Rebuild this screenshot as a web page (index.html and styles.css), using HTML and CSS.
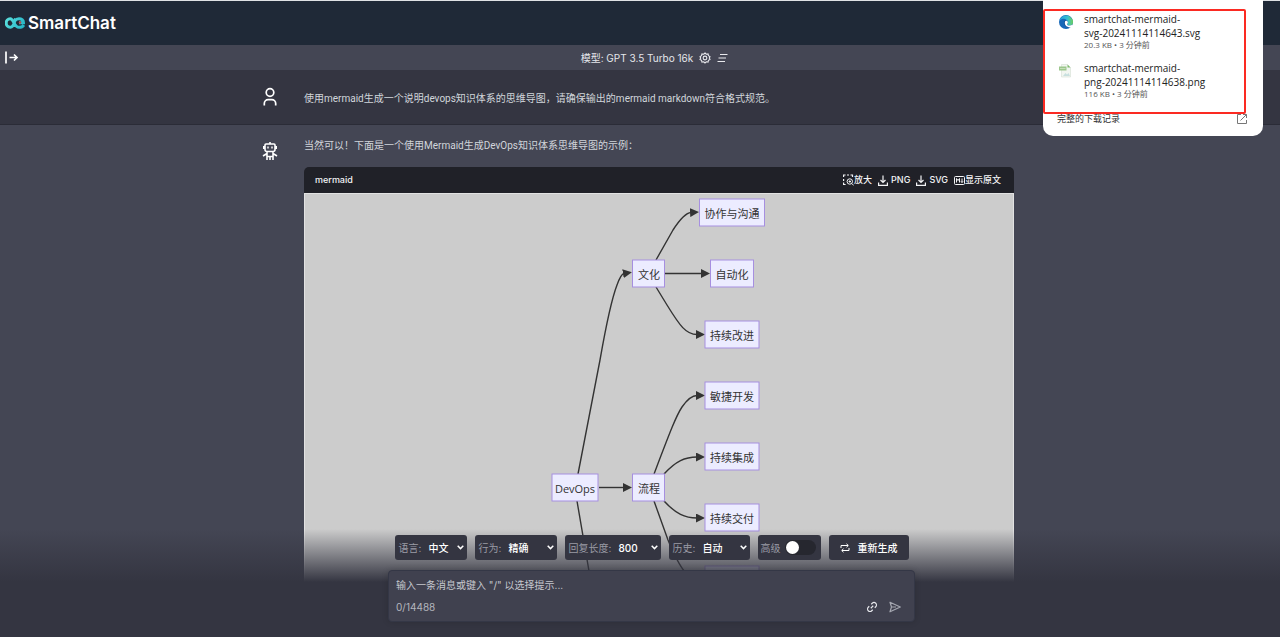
FILE: index.html
```html
<!DOCTYPE html>
<html lang="zh-CN">
<head>
<meta charset="utf-8">
<title>SmartChat</title>
<link rel="stylesheet" href="styles.css">
</head>
<body>
<div class="app">
  <header class="header">
    <svg class="logo" width="20" height="12" viewBox="0 0 20 12" fill="none" aria-hidden="true">
      <defs><linearGradient id="logo-tint" x1="0" y1="0" x2="20" y2="12" gradientUnits="userSpaceOnUse"><stop stop-color="#5fe3df"/><stop offset="1" stop-color="#1fb0c4"/></linearGradient></defs>
      <path d="M10.500 1.500C9.500 5 9 10.300 5.200 10.300A4 4.300 0 1 1 5.200 1.700C9 1.700 9 10.300 14 10.300C16.500 10.300 18 9.500 18.800 8M10 3.700C11 2.200 12.300 1.700 14 1.700C16.500 1.700 18.500 3.200 18.500 5.700H14" stroke="url(#logo-tint)" stroke-width="3"/>
      <circle cx="15" cy="5.500" r="1.200" fill="#b8464a"/>
    </svg>
    <h1 class="brand">SmartChat</h1>
  </header>

  <div class="modelbar">
    <button class="icon-button" aria-label="展开侧栏">
      <svg width="14" height="14" viewBox="0 0 14 14" fill="none" stroke="currentColor" stroke-width="1.700"><path d="M1 .5v12M4.500 6.500H12M9 3.500l3 3-3 3"/></svg>
    </button>
    <div class="model">
      <span>模型: GPT 3.5 Turbo 16k</span>
      <button class="icon-button" aria-label="设置">
        <svg width="12" height="12" viewBox="0 0 24 24" fill="none" stroke="currentColor" stroke-width="2.200"><path d="M12 2l2.600 2.500 3.500-.6.8 3.500L22 9.200 20.600 12l1.400 2.900-3.100 1.700-.8 3.500-3.500-.6L12 22l-2.600-2.500-3.500.6-.8-3.500L2 14.900 3.400 12 2 9.200l3.100-1.800.8-3.500 3.500.6z"/><circle cx="12" cy="12" r="3.700"/></svg>
      </button>
      <button class="icon-button" aria-label="清空对话">
        <svg width="11" height="10" viewBox="0 0 11 10" fill="none" stroke="currentColor"><path d="M3 1.500h7.500M1.500 5H9M.5 8.500h7.500"/></svg>
      </button>
    </div>
  </div>

  <main class="chat">
    <section class="message message-user">
      <div class="message-inner">
        <svg class="avatar" width="16" height="20" viewBox="0 0 16 20" fill="none" stroke="currentColor" stroke-width="1.700" aria-hidden="true"><circle cx="8" cy="5.500" r="3.800"/><path d="M2.300 18.500v-2a3.800 3.800 0 0 1 3.800-3.800h3.800a3.800 3.800 0 0 1 3.800 3.800v2"/></svg>
        <p>使用mermaid生成一个说明devops知识体系的思维导图，请确保输出的mermaid markdown符合格式规范。</p>
      </div>
    </section>
    <section class="message message-bot">
      <div class="message-inner">
        <svg class="avatar" width="16" height="20" viewBox="0 0 16 20" fill="none" stroke="currentColor" stroke-width="1.600" aria-hidden="true"><path d="M8 1v2M4 3h8a1 1 0 0 1 1 1v4.500a2 2 0 0 1-2 2H5a2 2 0 0 1-2-2V4a1 1 0 0 1 1-1zM1.800 5v3M14.200 5v3M5 10.500V19M11 10.500V19M5 12.500L1 15M11 12.500l4 2.500M5 15.500h6M8 15.500v3.500"/><path d="M5.300 6.500h1.400M9.300 6.500h1.400" stroke-width="1.800"/></svg>
        <div class="answer">
          <p>当然可以！下面是一个使用Mermaid生成DevOps知识体系思维导图的示例：</p>
          <div class="codebox">
            <div class="codebar">
              <span>mermaid</span>
              <div class="tools">
                <button class="tool"><svg width="11" height="12" viewBox="0 0 11 12" fill="none" stroke="currentColor"><path d="M.6 3V1h2M4 1h2M7.500 1h2v2M.6 5v2M.6 8.500v2h2" stroke-width="1.200"/><circle cx="6.800" cy="7.500" r="2.700"/><path d="M8.800 9.500l2 2M5.600 7.500h2.400M6.800 6.300v2.400"/></svg>放大</button>
                <button class="tool tool-spaced"><svg width="10" height="11" viewBox="0 0 10 11" fill="none" stroke="currentColor" stroke-width="1.200"><path d="M5 .5v7M2.500 5L5 7.500 7.500 5M.6 7.500v2.800h8.800V7.500"/></svg>PNG</button>
                <button class="tool tool-spaced"><svg width="10" height="11" viewBox="0 0 10 11" fill="none" stroke="currentColor" stroke-width="1.200"><path d="M5 .5v7M2.500 5L5 7.500 7.500 5M.6 7.500v2.800h8.800V7.500"/></svg>SVG</button>
                <button class="tool"><svg width="11" height="9" viewBox="0 0 11 9" fill="none" stroke="currentColor"><rect x=".5" y=".5" width="10" height="8" rx="1"/><path d="M2.500 6.500v-4l1.500 2 1.500-2v4M8 2.500v4M7 5.300l1 1.200 1-1.200"/></svg>显示原文</button>
              </div>
            </div>
            <div class="canvas">
              <svg class="diagram" width="710" height="446" viewBox="0 0 710 446" role="img" aria-label="DevOps 知识体系">
                <defs><marker id="arrow" markerUnits="userSpaceOnUse" markerWidth="9" markerHeight="9" refX="1" refY="4.500" orient="auto"><path d="M0 0L9 4.500L0 9z" fill="#333"/></marker></defs>
                <g class="edges">
                  <path d="M352 66L369 36Q380 19 387 18.500"/>
                  <path d="M361 79.500H398"/>
                  <path d="M352 93L363 111C376 132 382 140.500 393 140.500"/>
                  <path d="M274 280L296 166C303 126 308 104 313 91Q317 80 320 79.500"/>
                  <path d="M295 293.500H320"/>
                  <path d="M350 280C366 238 372 222 378 213Q386 201.500 393 201.500"/>
                  <path d="M360 280C372 267 381 263 393 263"/>
                  <path d="M360 307C372 320 381 324 393 324"/>
                  <path class="open" d="M273 307L285 377L290 405"/>
                  <path class="open" d="M350 307L364 346Q374 370 381 378L401 386"/>
                </g>
                <g class="nodes">
                  <rect x="395.500" y="5" width="65" height="27"/><text x="428" y="24">协作与沟通</text>
                  <rect x="406.500" y="66" width="43" height="27"/><text x="428" y="85">自动化</text>
                  <rect x="401" y="127" width="54" height="27"/><text x="428" y="146">持续改进</text>
                  <rect x="401" y="188" width="54" height="27"/><text x="428" y="207">敏捷开发</text>
                  <rect x="401" y="249" width="54" height="27"/><text x="428" y="268">持续集成</text>
                  <rect x="401" y="310" width="54" height="27"/><text x="428" y="329">持续交付</text>
                  <rect x="401" y="372" width="54" height="27"/>
                  <rect x="328.500" y="66" width="32" height="27"/><text x="345" y="85">文化</text>
                  <rect x="328.500" y="280" width="32" height="27"/><text x="345" y="299">流程</text>
                  <rect x="248" y="280" width="46" height="27"/><text x="271" y="299">DevOps</text>
                </g>
              </svg>
            </div>
          </div>
        </div>
      </div>
    </section>
  </main>

  <footer class="footer">
    <div class="controls">
      <div class="control control-language"><label for="language">语言:</label><select id="language"><option>中文</option></select><svg class="chevron" width="7" height="5" viewBox="0 0 7 5"><path d="M.7.8l2.800 2.800L6.300.8"/></svg></div>
      <div class="control control-behavior"><label for="behavior">行为:</label><select id="behavior"><option>精确</option></select><svg class="chevron" width="7" height="5" viewBox="0 0 7 5"><path d="M.7.8l2.800 2.800L6.300.8"/></svg></div>
      <div class="control control-length"><label for="length">回复长度:</label><select id="length"><option>800</option></select><svg class="chevron" width="7" height="5" viewBox="0 0 7 5"><path d="M.7.8l2.800 2.800L6.300.8"/></svg></div>
      <div class="control control-history"><label for="history">历史:</label><select id="history"><option>自动</option></select><svg class="chevron" width="7" height="5" viewBox="0 0 7 5"><path d="M.7.8l2.800 2.800L6.300.8"/></svg></div>
      <div class="control control-advanced"><label for="advanced">高级</label><input class="switch" type="checkbox" role="switch" id="advanced"></div>
      <button class="regenerate"><svg width="10" height="10" viewBox="0 0 10 10" fill="none" stroke="currentColor"><path d="M1 5V2.500h7M6.500.8L8.300 2.500 6.500 4.200M9 5v2.500H2M3.500 5.800L1.700 7.500l1.800 1.700"/></svg>重新生成</button>
    </div>
    <form class="composer">
      <input class="prompt" type="text" aria-label="消息" placeholder="输入一条消息或键入 &quot;/&quot; 以选择提示...">
      <div class="composer-row">
        <span class="count">0/14488</span>
        <button type="button" class="icon-button" aria-label="添加链接"><svg width="12" height="12" viewBox="0 0 24 24" fill="none" stroke="currentColor" stroke-width="2.200"><path d="M9.500 14.500l5-5M10.500 6.500l2-2a4.900 4.900 0 0 1 7 7l-2 2M13.500 17.500l-2 2a4.900 4.900 0 0 1-7-7l2-2"/></svg></button>
        <button type="button" class="icon-button send" aria-label="发送"><svg width="12" height="12" viewBox="0 0 12 12" fill="none" stroke="currentColor" stroke-width="1.200" stroke-linejoin="round"><path d="M1 1.200L11.300 6 1 10.800 2.500 6zM2.500 6h4.500"/></svg></button>
      </div>
    </form>
  </footer>

  <aside class="downloads">
    <ul class="files">
      <li class="file">
        <svg width="14" height="14" viewBox="0 0 14 14" aria-hidden="true">
          <defs><linearGradient id="edge-top" x1="0" y1="0" x2="1" y2="0"><stop stop-color="#239ddf"/><stop offset=".6" stop-color="#36bfd0"/><stop offset="1" stop-color="#6fd15a"/></linearGradient></defs>
          <circle cx="7" cy="7" r="7" fill="#1767b8"/>
          <path d="M.2 6A7 7 0 0 1 14 7c0 2.500-1.700 3.500-3.500 3.500S8 9.800 8 9.300s.9-.8.9-2C8.900 5.500 7 3.700 4.500 3.700 2.500 3.700 1 4.800.2 6z" fill="url(#edge-top)"/>
          <path d="M5 7.500C5 6 6 5.300 7 5.200c1.200.2 1.900 1.100 1.900 2.100 0 1.200-.9 1.500-.9 2 0 1.200 3 2.300 5 .7C11.800 12 10 12.800 8.500 12.500 6.500 12 5 10 5 7.500z" fill="#124d93"/>
          <path d="M7 5.800c1.200 0 1.900.7 1.900 1.600 0 1-.9 1.300-.9 1.900 0 1.200 3.200 1.900 5.400.5L14 11.500l-2 1C9 12.500 5.800 11 5.800 8 5.800 6.700 6.300 5.800 7 5.800z" fill="#fff"/>
        </svg>
        <div><div class="file-name">smartchat-mermaid-<br>svg-20241114114643.svg</div><div class="file-meta">20.3 KB • 3 分钟前</div></div>
      </li>
      <li class="file">
        <svg width="14" height="14" viewBox="0 0 14 14" aria-hidden="true"><path d="M2.500.5h6l3 3v9.500h-9z" fill="#f2f6f1" stroke="#d5dfd3" stroke-width=".6"/><path d="M8.500.5v3h3z" fill="#7fb96c"/><path d="M0 2.500h7.500v4H0z" fill="#9cc78c"/><path d="M1 4.500h5.500" stroke="#c5dfba"/><path d="M4 12l2.500-3L8 10.500 9.500 9l1.500 3z" fill="#c8e0df"/></svg>
        <div><div class="file-name">smartchat-mermaid-<br>png-20241114114638.png</div><div class="file-meta">116 KB • 3 分钟前</div></div>
      </li>
    </ul>
    <a class="history-link" href="#downloads">完整的下载记录<svg width="10" height="10" viewBox="0 0 10 10" fill="none" stroke="#777"><path d="M4 .5H.5v9h9V6M6 .5h3.500V4M9.500.5L3.500 6.500"/></svg></a>
  </aside>
</div>
</body>
</html>
```
FILE: styles.css
```css
* { box-sizing: border-box; }

body {
  margin: 0;
  font: 10px/16px Inter, "Noto Sans CJK SC", sans-serif;
  color: #d1d5db;
  background: #444654;
}

p, h1, ul { margin: 0; padding: 0; }

button, select, input { font: inherit; color: inherit; }

button {
  padding: 0;
  border: 0;
  background: none;
  cursor: pointer;
}

svg { display: block; flex: none; }

.app {
  position: relative;
  display: flex;
  flex-direction: column;
  height: 100vh;
  overflow: hidden;
}

.header {
  display: flex;
  align-items: center;
  gap: 3px;
  height: 45px;
  padding-left: 5px;
  flex: none;
  border-top: 1px solid #dfe2e5;
  background: #1f2937;
}

.brand {
  font-size: 17px;
  line-height: 24px;
  font-weight: 600;
  color: #fff;
}

.icon-button { display: flex; color: #e8e9ed; }

.modelbar {
  display: flex;
  align-items: center;
  height: 25px;
  padding-left: 5px;
  flex: none;
}

.modelbar > .icon-button { color: #fff; }

.model {
  display: flex;
  flex: 1;
  justify-content: center;
  align-items: center;
  gap: 6px;
  padding-left: 10px;
  color: #e5e7eb;
}

.chat { flex: 1; min-height: 0; overflow: hidden; }

.message {
  font-family: Roboto, "Noto Sans CJK SC", sans-serif;
}

.message-user {
  padding: 17px 4px 17px 0;
  border-bottom: 1px solid #2b2c37;
  background: #343541;
}

.message-bot { padding: 13px 4px 0 0; }

.message-inner {
  display: grid;
  grid-template-columns: 16px minmax(0, 1fr);
  column-gap: 26px;
  align-items: start;
  max-width: 752px;
  margin: 0 auto;
}

.message-user .message-inner { align-items: end; }

.avatar { color: #fff; }

.message-bot .avatar { margin-top: 3px; }

.codebox {
  margin-top: 13px;
  border-radius: 5px;
  overflow: hidden;
  font-family: Inter, "Noto Sans CJK SC", sans-serif;
}

.codebar {
  display: flex;
  justify-content: space-between;
  align-items: center;
  height: 26px;
  padding: 0 13px 0 11px;
  font-size: 9px;
  font-weight: 500;
  color: #f3f4f6;
  background: #202128;
}

.tools { display: flex; gap: 6px; }

.tool { display: flex; align-items: center; }

.tool-spaced { gap: 3px; }

.canvas {
  display: flex;
  justify-content: center;
  border: solid #e2e2e2;
  border-width: 1px 1px 0;
  background: #ccc;
}

.edges path {
  fill: none;
  stroke: #333;
  stroke-width: 1.400;
  marker-end: url(#arrow);
}

.edges .open { marker-end: none; }

.nodes rect { fill: #ececff; stroke: #a68fe0; }

.nodes text {
  font: 11px "Open Sans", "Noto Sans CJK SC", sans-serif;
  text-anchor: middle;
  fill: #333;
}

.footer {
  position: absolute;
  inset: auto 0 0;
  display: flex;
  flex-direction: column;
  align-items: center;
  gap: 10px;
  padding: 6px 0 15px 23px;
  background: linear-gradient(rgba(52, 53, 65, 0), #343541 53px);
}

.controls { display: flex; gap: 8px; }

.control {
  position: relative;
  display: flex;
  align-items: center;
  gap: 7px;
  height: 25px;
  padding-left: 4px;
  border-radius: 3px;
  color: #9a9ba5;
  background: #343541;
}

.control-language { width: 72px; }
.control-behavior { width: 82px; }
.control-length { width: 96px; }
.control-history { width: 81px; }
.control-advanced { width: 63px; gap: 4px; padding-left: 3px; }

.control label { flex: none; }

.control select {
  appearance: none;
  flex: 1;
  min-width: 0;
  padding: 0;
  border: 0;
  font-weight: 500;
  color: #fff;
  background: none;
}

.chevron {
  position: absolute;
  right: 3px;
  pointer-events: none;
  fill: none;
  stroke: #fff;
  stroke-width: 1.500;
}

.switch {
  appearance: none;
  display: flex;
  width: 31px;
  height: 15px;
  margin: 0;
  padding: 1px;
  border-radius: 8px;
  background: #26272f;
}

.switch::before {
  content: "";
  width: 13px;
  height: 13px;
  border-radius: 50%;
  background: #fff;
}

.regenerate {
  display: flex;
  align-items: center;
  justify-content: center;
  gap: 8px;
  width: 80px;
  border-radius: 3px;
  font-weight: 500;
  color: #fff;
  background: #343541;
}

.composer {
  width: 100%;
  max-width: 527px;
  padding: 6px 7px;
  border: 1px solid #343746;
  border-radius: 4px;
  background: #40414f;
  box-shadow: 0 0 6px rgba(0, 0, 0, 0.15);
}

.prompt {
  display: block;
  width: 100%;
  height: 16px;
  padding: 0;
  border: 0;
  background: none;
}

.prompt::placeholder { color: #c5c7cd; }

.composer-row {
  display: flex;
  align-items: center;
  gap: 11px;
  margin-top: 6px;
  padding-right: 6px;
}

.count { flex: 1; color: #b4b6be; }

.send { color: #a5a7b0; }

.downloads {
  position: absolute;
  top: 0;
  right: 17px;
  width: 220px;
  padding: 9px 0 12px;
  border-radius: 0 0 10px 10px;
  font: 10px/14px "Open Sans", "Noto Sans CJK SC", sans-serif;
  color: #222;
  background: #fff;
}

.files {
  width: 203px;
  height: 105px;
  padding: 1px 14px;
  border: 2px solid #fb2a22;
  border-radius: 2px;
  list-style: none;
}

.file { display: flex; gap: 11px; }

.file + .file { margin-top: 11px; }

.file > svg { margin-top: 3px; }

.file-meta { font-size: 8px; line-height: 10px; color: #555; }

.history-link {
  display: flex;
  justify-content: space-between;
  align-items: center;
  height: 10px;
  padding: 0 16px 0 14px;
  font-size: 9px;
  color: #333;
  text-decoration: none;
}
```
